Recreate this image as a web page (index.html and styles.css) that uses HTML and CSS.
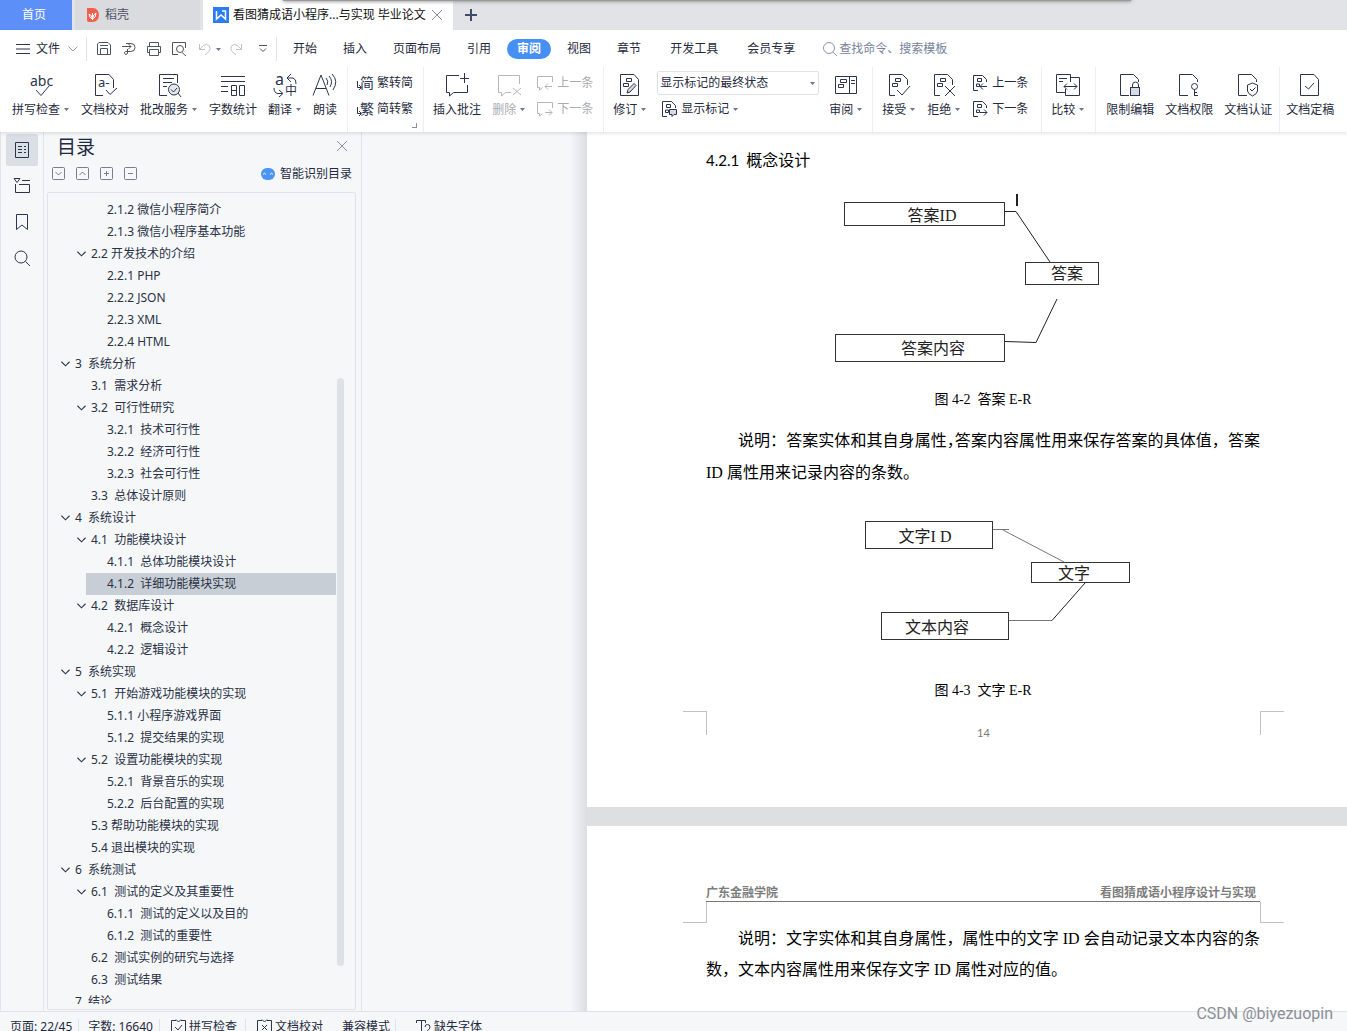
FILE: index.html
```html
<!DOCTYPE html>
<html lang="zh-CN">
<head>
<meta charset="utf-8">
<title>看图猜成语小程序设计与实现 毕业论文</title>
<link rel="stylesheet" href="styles.css">
</head>
<body>
<svg class="defs" aria-hidden="true">
  <symbol id="chev" viewBox="0 0 10 6"><path d="M.5 .5L5 5L9.5 .5"/></symbol>
  <symbol id="caret" viewBox="0 0 5 3"><path d="M0 0H5L2.5 3Z"/></symbol>
  <symbol id="docmark" viewBox="0 0 24 24"><path d="M8 22.500H2.500V1.500H15.500L20.500 6.500V12M8.500 5.500H13.500V8.500H8.500ZM5.500 10.500V13.500H10.500V10.500Z"/></symbol>
  <symbol id="docsmall" viewBox="0 0 16 16"><path d="M6 15.500H1.500V.5H10.500L14.500 4.500V7M5.500 3.500V6.500H9.500V3.500ZM4.500 9V11.500H7.500V9Z"/></symbol>
  <symbol id="blank" viewBox="0 0 24 24"><path d="M11 22.500H2.500V1.500H15.500L20.500 6.500V9"/></symbol>
</svg>
<div class="app">
  <header>
    <nav class="tabs" aria-label="标签">
      <div class="window-shade"></div>
      <button class="tab home">首页</button>
      <button class="tab docer"><svg width="16" height="16" viewBox="0 0 16 16"><path fill="#f2604d" stroke="none" d="M2 1H8A6 7 0 0 1 8 15H4Q2 15 2 13Z"/><path stroke="#fff" d="M7.500 13V6M7.500 12Q4 11 4 7Q7 8 7.500 12Q11 11 11 6Q8 7 7.500 12"/></svg>稻壳</button>
      <div class="tab current"><svg width="16" height="16" viewBox="0 0 16 16"><rect width="16" height="16" fill="#2b7cf0" stroke="none"/><path stroke="#fff" stroke-width="1.500" d="M3.500 4V12L8 8L12.500 12V4H9"/></svg><span>看图猜成语小程序...与实现 毕业论文</span><button class="close" aria-label="关闭标签"><svg width="10" height="10" viewBox="0 0 10 10"><path d="M0 0L10 10M10 0L0 10"/></svg></button></div>
      <button class="new" aria-label="新建"><svg width="12" height="12" viewBox="0 0 12 12"><path d="M6 0V12M0 6H12"/></svg></button>
    </nav>

    <div class="menu">
      <button class="file"><svg width="14" height="10" viewBox="0 0 14 10"><path d="M0 .5H14M0 5H14M0 9.500H14"/></svg>文件<svg class="pale" width="10" height="6"><use href="#chev"/></svg></button>
      <div class="quick">
        <button aria-label="保存"><svg width="16" height="16" viewBox="0 0 16 16"><path d="M1.500 13.500V3L3 1.500H12L14.500 4V13.500ZM4.500 13.500V7.500H11.500V13.500M4 4.500H12"/></svg></button>
        <button aria-label="输出为PDF"><svg width="16" height="16" viewBox="0 0 16 16"><path d="M5 2.500H10A4 4 0 0 1 10 10.500H6M1 5.500H10M7.500 3L10 5.500L7.500 8M6.500 8V12A1.500 1.500 0 1 1 4.500 10.500H7"/></svg></button>
        <button aria-label="打印"><svg width="16" height="16" viewBox="0 0 16 16"><path d="M3.500 5V1.500H12.500V5M3.500 11.500H1.500V5.500H14.500V11.500H12.500M3.500 8.500H12.500V14.500H3.500Z"/></svg></button>
        <button aria-label="打印预览"><svg width="16" height="16" viewBox="0 0 16 16"><path d="M7 13.500H1.500V1.500H14.500V7M11 11.500L15 15"/><circle cx="9" cy="8" r="3.500"/></svg></button>
        <button class="faint undo" aria-label="撤销"><svg width="14" height="14" viewBox="0 0 14 14"><path d="M1.500 2V7.500H7M1.500 7.500L5.500 3.500Q9 1 11.500 4Q13 7 11 9.500L7 13"/></svg></button>
        <button aria-label="撤销列表"><svg class="caret" width="5" height="3"><use href="#caret"/></svg></button>
        <button class="faint redo" aria-label="恢复"><svg width="14" height="14" viewBox="0 0 14 14"><path d="M12.500 2V7.500H7M12.500 7.500L8.500 3.500Q5 1 2.500 4Q1 7 3 9.500L7 13"/></svg></button>
        <button class="more" aria-label="更多"><svg width="8" height="8" viewBox="0 0 8 8"><path d="M0 .5H8M1 3.500L4 6.500L7 3.500"/></svg></button>
      </div>
      <nav class="menus" aria-label="功能区">
        <button>开始</button><button>插入</button><button>页面布局</button><button>引用</button><button class="on">审阅</button><button>视图</button><button>章节</button><button class="wide">开发工具</button><button class="wide">会员专享</button>
      </nav>
      <label class="search"><svg width="16" height="16" viewBox="0 0 16 16"><circle cx="7" cy="7" r="5.500"/><path d="M11 11L15 15"/></svg><input type="search" placeholder="查找命令、搜索模板" aria-label="查找命令"></label>
    </div>

    <div class="ribbon">
      <div class="group">
        <button class="tool"><svg viewBox="0 0 24 24"><text x="1" y="13" font-size="14">abc</text><path d="M7 17L12 22.500L20 13"/></svg><span>拼写检查<svg class="caret" width="5" height="3"><use href="#caret"/></svg></span></button>
        <button class="tool"><svg viewBox="0 0 24 24"><path d="M10 22.500H2.500V1.500H16L20.500 6.500V15M13 17L17 21.500L24 15"/><text x="5" y="14" font-size="13">a-</text></svg><span>文档校对</span></button>
        <button class="tool"><svg viewBox="0 0 24 24"><path d="M10 22.500H2.500V1.500H20.500V10M6 5.500H17M6 9.500H15M6 13.500H10M21 20L24 24"/><circle cx="17" cy="16.500" r="5.500" fill="#e5e7eb"/><path d="M14 16.500L16.500 19L20 15"/></svg><span>批改服务<svg class="caret" width="5" height="3"><use href="#caret"/></svg></span></button>
        <button class="tool"><svg viewBox="0 0 24 24"><path d="M0 3.500H24M0 8.500H24M0 13.500H7M0 18.500H7M10.500 12.500H15.500V22.500H10.500ZM18.500 12.500H23.500V22.500H18.500ZM10 17.500H15"/></svg><span>字数统计</span></button>
        <button class="tool"><svg viewBox="0 0 24 24"><text x="2" y="12" font-size="16">a</text><text x="12" y="22" font-size="12">中</text><path d="M18 1L14 5L18 9M14 5H20Q23.500 6 23 11M1 15Q1 20 5 20.500H9M6 17L10 20.500L6 24"/></svg><span>翻译<svg class="caret" width="5" height="3"><use href="#caret"/></svg></span></button>
        <button class="tool"><svg viewBox="0 0 24 24"><path d="M0 22.500L8 2L16 22.500M3 15.500H13M13 5Q16 8 14 12M16 3Q20.500 8 17 14M19 1Q26 8 20 17"/></svg><span>朗读</span></button>
      </div>
      <div class="group corner">
        <div class="pair">
          <button><svg viewBox="0 0 16 16"><text x="3" y="13" font-size="14">简</text><path d="M.5 6V12.500H4M2 10L4.500 12.500L2 15"/></svg>繁转简</button>
          <button><svg viewBox="0 0 16 16"><text x="3" y="13" font-size="14">繁</text><path d="M.5 6V12.500H4M2 10L4.500 12.500L2 15"/></svg>简转繁</button>
        </div>
      </div>
      <div class="group">
        <button class="tool"><svg viewBox="0 0 24 24"><path d="M14 2.500H1.500V19.500H4.500V23L8.500 19.500H22.500V12M19.500 0V10M15 5.500H24"/></svg><span>插入批注</span></button>
        <button class="tool" disabled><svg viewBox="0 0 24 24"><path d="M22.500 11V2.500H1.500V19.500H4.500V23L8.500 19.500H14M16 15L24 22M24 15L16 22"/></svg><span>删除<svg class="caret" width="5" height="3"><use href="#caret"/></svg></span></button>
        <div class="pair">
          <button disabled><svg viewBox="0 0 16 16"><path d="M15.500 7V1.500H.5V12.500H2.500V15L5.500 12.500M15 11.500H8M11 8.500L8 11.500L11 14.500"/></svg>上一条</button>
          <button disabled><svg viewBox="0 0 16 16"><path d="M15.500 7V1.500H.5V12.500H2.500V15L5.500 12.500M8 11.500H15M12 8.500L15 11.500L12 14.500"/></svg>下一条</button>
        </div>
      </div>
      <div class="group track">
        <button class="tool"><svg viewBox="0 0 24 24"><path d="M2.500 22.500V1.500H16L20.500 6.500V22.500ZM8.500 5.500V8.500H13.500V5.500ZM5.500 10.500V13.500H10.500V10.500Z"/><path fill="#d8dbe0" d="M9 20L10 16.500L16 10.500L18 12.500L12 19Z"/></svg><span>修订<svg class="caret" width="5" height="3"><use href="#caret"/></svg></span></button>
        <div class="pair">
          <span class="combo"><select aria-label="标记状态"><option>显示标记的最终状态</option></select><svg class="caret" width="5" height="3"><use href="#caret"/></svg></span>
          <button class="inset"><svg viewBox="0 0 16 16"><use href="#docsmall"/><path fill="#d8dbe0" d="M8.500 8.500H15.500V13.500H13L11 15.500V13.500H8.500Z"/></svg>显示标记<svg class="caret" width="5" height="3"><use href="#caret"/></svg></button>
        </div>
        <button class="tool"><svg viewBox="0 0 24 24"><path d="M1.500 3.500H22.500V20.500H1.500ZM15.500 3.500V20.500M6.500 6.500V9.500H12.500V6.500ZM4.500 11.500V14.500H9.500V11.500ZM17 7.500H21M17 10.500H21"/></svg><span>审阅<svg class="caret" width="5" height="3"><use href="#caret"/></svg></span></button>
      </div>
      <div class="group loose">
        <button class="tool"><svg viewBox="0 0 24 24"><use href="#docmark"/><path d="M10 17L15 22L23 13"/></svg><span>接受<svg class="caret" width="5" height="3"><use href="#caret"/></svg></span></button>
        <button class="tool"><svg viewBox="0 0 24 24"><use href="#docmark"/><path d="M13 13L23 23M23 13L13 23"/></svg><span>拒绝<svg class="caret" width="5" height="3"><use href="#caret"/></svg></span></button>
        <div class="pair">
          <button><svg viewBox="0 0 16 16"><use href="#docsmall"/><path d="M15 11.500H8M11 8.500L8 11.500L11 14.500"/></svg>上一条</button>
          <button><svg viewBox="0 0 16 16"><use href="#docsmall"/><path d="M8 11.500H15M12 8.500L15 11.500L12 14.500"/></svg>下一条</button>
        </div>
      </div>
      <div class="group">
        <button class="tool"><svg viewBox="0 0 24 24"><path d="M14.500 9V1.500H.5V19.500H9M14.500 4.500H23.500V22.500H9.500V16M3 5.500H11M3 8.500H7M8 13.500H21M11 10.500L8 13.500L11 16.500M18 10.500L21 13.500L18 16.500"/></svg><span>比较<svg class="caret" width="5" height="3"><use href="#caret"/></svg></span></button>
      </div>
      <div class="group tight">
        <button class="tool"><svg viewBox="0 0 24 24"><use href="#blank"/><path d="M14.500 15V12A3 3 0 0 1 20.500 12V15"/><rect x="12.500" y="14.500" width="9" height="8" fill="#d8dbe0"/></svg><span>限制编辑</span></button>
        <button class="tool"><svg viewBox="0 0 24 24"><use href="#blank"/><circle cx="17.500" cy="13.500" r="3"/><path d="M17.500 16.500V23M17.500 19.500H20M17.500 22.500H21"/></svg><span>文档权限</span></button>
        <button class="tool"><svg viewBox="0 0 24 24"><use href="#blank"/><path d="M11.500 12L16.500 10L21.500 12V18Q21 21 16.500 23Q12 21 11.500 18ZM14 16L16 18L19.500 14.500"/></svg><span>文档认证</span></button>
      </div>
      <div class="group last">
        <button class="tool"><svg viewBox="0 0 24 24"><path d="M2.500 22.500V1.500H16L20.500 6.500V22.500ZM7 13L10.500 16L16 10"/></svg><span>文档定稿</span></button>
      </div>
    </div>
  </header>

  <div class="main">
    <nav class="rail" aria-label="侧栏">
      <button class="on" aria-label="目录"><svg width="16" height="16" viewBox="0 0 16 16"><path d="M1.500 .5H14.500V15.500H1.500ZM4 4.500H8M10 4.500H12M4 7.500H8M10 7.500H12M4 10.500H8M10 10.500H12"/></svg></button>
      <button aria-label="章节"><svg width="16" height="16" viewBox="0 0 16 16"><path d="M0 .5H6L3 4.500ZM8 2.500H16M1.500 6V14.500H15.500V6.500H5"/></svg></button>
      <button aria-label="书签"><svg width="16" height="16" viewBox="0 0 16 16"><path d="M2.500 .5H13.500V15.500L8 11L2.500 15.500Z"/></svg></button>
      <button aria-label="查找"><svg width="16" height="16" viewBox="0 0 16 16"><circle cx="7" cy="7" r="6"/><path d="M11.500 11.500L16 16"/></svg></button>
    </nav>

    <aside class="panel">
      <div class="title"><h2>目录</h2><button aria-label="关闭"><svg width="10" height="10" viewBox="0 0 10 10"><path d="M0 0L10 10M10 0L0 10"/></svg></button></div>
      <div class="bar">
        <button aria-label="展开"><svg width="13" height="13" viewBox="0 0 13 13"><rect x=".5" y=".5" width="12" height="12" rx="1"/><path d="M3.500 5L6.500 8L9.500 5"/></svg></button>
        <button aria-label="折叠"><svg width="13" height="13" viewBox="0 0 13 13"><rect x=".5" y=".5" width="12" height="12" rx="1"/><path d="M3.500 8L6.500 5L9.500 8"/></svg></button>
        <button aria-label="增加"><svg width="13" height="13" viewBox="0 0 13 13"><rect x=".5" y=".5" width="12" height="12" rx="1"/><path d="M4 6.500H9M6.500 4V9"/></svg></button>
        <button aria-label="减少"><svg width="13" height="13" viewBox="0 0 13 13"><rect x=".5" y=".5" width="12" height="12" rx="1"/><path d="M4 6.500H9"/></svg></button>
        <button class="smart"><svg width="14" height="12" viewBox="0 0 14 12"><rect width="14" height="12" rx="6" fill="#4a94f5" stroke="none"/><path stroke="#fff" d="M2 6.500Q3.500 4 5 6.500M9 6.500Q10.500 4 12 6.500"/></svg>智能识别目录</button>
      </div>
      <div class="outline">
        <ul>
          <li class="l3"><a href="#">2.1.2 微信小程序简介</a></li>
          <li class="l3"><a href="#">2.1.3 微信小程序基本功能</a></li>
          <li class="l2"><svg><use href="#chev"/></svg><a href="#">2.2 开发技术的介绍</a></li>
          <li class="l3"><a href="#">2.2.1 PHP</a></li>
          <li class="l3"><a href="#">2.2.2 JSON</a></li>
          <li class="l3"><a href="#">2.2.3 XML</a></li>
          <li class="l3"><a href="#">2.2.4 HTML</a></li>
          <li class="l1"><svg><use href="#chev"/></svg><a href="#">3  系统分析</a></li>
          <li class="l2"><a href="#">3.1  需求分析</a></li>
          <li class="l2"><svg><use href="#chev"/></svg><a href="#">3.2  可行性研究</a></li>
          <li class="l3"><a href="#">3.2.1  技术可行性</a></li>
          <li class="l3"><a href="#">3.2.2  经济可行性</a></li>
          <li class="l3"><a href="#">3.2.3  社会可行性</a></li>
          <li class="l2"><a href="#">3.3  总体设计原则</a></li>
          <li class="l1"><svg><use href="#chev"/></svg><a href="#">4  系统设计</a></li>
          <li class="l2"><svg><use href="#chev"/></svg><a href="#">4.1  功能模块设计</a></li>
          <li class="l3"><a href="#">4.1.1  总体功能模块设计</a></li>
          <li class="l3 on"><a href="#" aria-current="true">4.1.2  详细功能模块实现</a></li>
          <li class="l2"><svg><use href="#chev"/></svg><a href="#">4.2  数据库设计</a></li>
          <li class="l3"><a href="#">4.2.1  概念设计</a></li>
          <li class="l3"><a href="#">4.2.2  逻辑设计</a></li>
          <li class="l1"><svg><use href="#chev"/></svg><a href="#">5  系统实现</a></li>
          <li class="l2"><svg><use href="#chev"/></svg><a href="#">5.1  开始游戏功能模块的实现</a></li>
          <li class="l3"><a href="#">5.1.1 小程序游戏界面</a></li>
          <li class="l3"><a href="#">5.1.2  提交结果的实现</a></li>
          <li class="l2"><svg><use href="#chev"/></svg><a href="#">5.2  设置功能模块的实现</a></li>
          <li class="l3"><a href="#">5.2.1  背景音乐的实现</a></li>
          <li class="l3"><a href="#">5.2.2  后台配置的实现</a></li>
          <li class="l2"><a href="#">5.3 帮助功能模块的实现</a></li>
          <li class="l2"><a href="#">5.4 退出模块的实现</a></li>
          <li class="l1"><svg><use href="#chev"/></svg><a href="#">6  系统测试</a></li>
          <li class="l2"><svg><use href="#chev"/></svg><a href="#">6.1  测试的定义及其重要性</a></li>
          <li class="l3"><a href="#">6.1.1  测试的定义以及目的</a></li>
          <li class="l3"><a href="#">6.1.2  测试的重要性</a></li>
          <li class="l2"><a href="#">6.2  测试实例的研究与选择</a></li>
          <li class="l2"><a href="#">6.3  测试结果</a></li>
          <li class="l1"><a href="#">7  结论</a></li>
        </ul>
        <div class="thumb"></div>
      </div>
    </aside>

    <main class="canvas">
      <div class="sheets">
        <article class="sheet first">
          <h3><span>4.2.1</span>  概念设计</h3>
          <svg class="figure" width="554" height="207" viewBox="706 177 554 207" role="img" aria-label="答案 E-R">
            <g class="box"><rect x="844.500" y="202.500" width="160" height="23"/><rect x="1025.500" y="262.500" width="73" height="22"/><rect x="835.500" y="334.500" width="169" height="27"/></g>
            <path d="M1005 211.500H1016L1050 262M1005 341.500L1036 342.500L1057 299"/>
            <path stroke-width="2" d="M1017 194V206"/>
            <text x="932" y="221">答案ID</text><text x="1067" y="279">答案</text><text x="933" y="354">答案内容</text>
          </svg>
          <p class="caption">图 4-2  答案 E-R</p>
          <p class="body"><span class="line full indent">说明：答案实体和其自身属性<span class="half">，</span>答案内容属性用来保存答案的具体值，答案</span><span class="line">ID 属性用来记录内容的条数。</span></p>
          <svg class="figure" width="554" height="186" viewBox="706 489 554 186" role="img" aria-label="文字 E-R">
            <g class="box"><rect x="865.500" y="521.500" width="127" height="27"/><rect x="1031.500" y="562.500" width="98" height="20"/><rect x="881.500" y="612.500" width="127" height="27"/></g>
            <path class="soft" d="M993 529.500H1009M1003 530L1064 562M1009 620.500H1052"/><path d="M1052 620.500L1085 583"/>
            <text x="925" y="542">文字I D</text><text x="1074" y="579">文字</text><text x="937" y="633">文本内容</text>
          </svg>
          <p class="caption">图 4-3  文字 E-R</p>
          <footer><i class="mark left"></i><span>14</span><i class="mark right"></i></footer>
        </article>
        <article class="sheet second">
          <div class="running"><span>广东金融学院</span><span>看图猜成语小程序设计与实现</span></div>
          <div class="marks"><i class="mark left low"></i><i class="mark right low"></i></div>
          <p class="body"><span class="line full indent">说明：文字实体和其自身属性，属性中的文字 ID 会自动记录文本内容的条</span><span class="line">数，文本内容属性用来保存文字 ID 属性对应的值。</span></p>
        </article>
      </div>
    </main>
  </div>

  <footer class="status">
    <span class="ruled">页面: 22/45</span><span class="ruled">字数: 16640</span>
    <button class="ruled"><svg width="15" height="16" viewBox="0 0 15 16"><path d="M5 1.500H.5V15.500H14.500V1.500H10M5 .5L7.500 3L10 .5M4 8L7 11L11 6"/></svg>拼写检查</button>
    <button><svg width="15" height="16" viewBox="0 0 15 16"><path d="M5 1.500H.5V15.500H14.500V1.500H10M5 .5L7.500 3L10 .5M5 6L10 11M10 6L5 11"/></svg>文档校对</button>
    <span class="mode ruled">兼容模式</span>
    <button><svg width="15" height="16" viewBox="0 0 15 16"><path d="M.5 4V1.500H9.500V4M5.500 1.500V14M4 14.500H7M9 8Q9 5.500 11.500 5.500Q14 5.500 14 8Q14 10 11.500 11.500V14"/></svg>缺失字体</button>
  </footer>
  <div class="watermark">CSDN @biyezuopin</div>
</div>
</body>
</html>
```
FILE: styles.css
```css
* { box-sizing: border-box; }
body, h2, h3, p, ul { margin: 0; padding: 0; }
body {
  font: 12px/16px "Noto Sans", "Noto Sans CJK SC", sans-serif;
  color: #1f2a40;
  overflow: hidden;
}
button, input, select {
  font: inherit;
  color: inherit;
  border: 0;
  background: none;
  padding: 0;
  margin: 0;
  white-space: nowrap;
}
svg { fill: none; stroke: #2b3550; flex: none; overflow: visible; }
svg text { fill: #2b3550; stroke: none; }
.defs { position: absolute; width: 0; height: 0; }
svg.caret { fill: #6b7590; stroke: none; }
.app { display: flex; flex-direction: column; height: 100vh; position: relative; }
header { position: relative; z-index: 1; background: #fff; flex: none; box-shadow: 0 1px 4px rgba(40, 50, 70, .16); }

/* window tabs */
.tabs { display: flex; height: 30px; background: #e2e3e7; position: relative; overflow: hidden; gap: 3px; }
.window-shade {
  position: absolute;
  top: -4px;
  left: 21%;
  right: 16%;
  height: 5px;
  background: #999;
  box-shadow: 0 0 4px #777;
}
.tab { display: flex; align-items: center; flex: none; }
.home { width: 72px; justify-content: center; padding-right: 4px; background: #5d8ff9; color: #fff; }
.docer { width: 125px; gap: 4px; padding-left: 10px; background: #dadbde; color: #4a5163; }
.current { width: 250px; gap: 4px; padding-left: 10px; background: #fff; color: #111; white-space: nowrap; }
.tab .close { display: flex; margin-left: auto; margin-right: 11px; }
.close svg, .title svg { stroke: #8791a8; }
.new { display: flex; align-items: center; margin-left: 9px; }
.new svg { stroke: #3f4b68; stroke-width: 2; }

/* menu row */
.menu { display: flex; align-items: center; height: 37px; padding-top: 1px; }
.menu button { display: flex; align-items: center; flex: none; }
.file { gap: 6px; padding: 0 8px 0 16px; }
.file .pale { stroke: #9aa1b0; margin-left: 2px; }
.quick { display: flex; align-items: center; gap: 9px; height: 24px; padding: 0 9px 0 9px; border: 1px solid #e0e2e7; border-width: 0 1px; }
.quick svg:not(.caret) { stroke: #50545e; }
.quick .undo { margin-left: 2px; }
.quick .undo + button { margin: 0 -1px 0 -5px; }
.quick .more { margin: 0 0 0 7px; }
.quick .faint svg { stroke: #c0c3ca; }
.menus { display: flex; padding-left: 3px; }
.menus button { padding: 2px 13px; }
.menus .wide { margin-left: 3px; }
.menus .on { padding: 2px 10px; margin: 0 3px; border-radius: 10px; background: #458ff5; color: #fff; font-weight: bold; }
.search { display: flex; align-items: center; flex: 1; gap: 1px; margin-left: 14px; color: #76829c; }
.search svg { stroke: #8a96ae; }
.search input { flex: 1; min-width: 0; outline: none; }
.search input::placeholder { color: #76829c; opacity: 1; }

/* ribbon */
.ribbon { display: flex; height: 65px; padding-left: 3px; overflow: hidden; }
.group { display: flex; flex: none; gap: 11px; padding: 6px 10px 0 9px; border-right: 1px solid #eceef1; }
.group.track { gap: 10px; padding-right: 9px; }
.group.loose { padding-right: 13px; }
.group.tight { padding-left: 10px; padding-right: 7px; }
.group.last { padding-left: 6px; border: 0; }
.corner { position: relative; }
.corner::after {
  content: "";
  position: absolute;
  right: 6px;
  bottom: 4px;
  width: 4px;
  height: 4px;
  border: 1px solid #8791a8;
  border-width: 0 1px 1px 0;
}
.tool { display: flex; flex-direction: column; align-items: center; gap: 4px; height: 48px; }
.tool > svg { width: 24px; height: 24px; }
.tool span { display: flex; align-items: center; gap: 4px; line-height: 17px; }
.tool span .caret { margin-right: 1px; }
.pair { display: flex; flex-direction: column; gap: 2px; margin-top: -2px; }
.pair button { display: flex; align-items: center; gap: 4px; height: 24px; }
.pair button > svg:first-child { width: 16px; height: 16px; }
.pair .inset { padding-left: 4px; }
.combo { position: relative; display: flex; align-items: center; width: 162px; height: 24px; }
.combo select { appearance: none; width: 100%; height: 24px; padding: 0 2px; border: 1px solid #dfe2e7; border-radius: 2px; }
.combo .caret { position: absolute; right: 4px; }
button:disabled { color: #a9acb3; }
button:disabled svg:not(.caret) { stroke: #b3b6bd; }

/* work area */
.main { display: flex; flex: 1; min-height: 0; background: #f5f7f9; }
.rail { display: flex; flex-direction: column; align-items: center; gap: 4px; width: 44px; flex: none; padding-top: 2px; border: 1px solid #e1e4e9; border-width: 0 1px; }
.rail button { display: flex; align-items: center; justify-content: center; width: 32px; height: 32px; border-radius: 2px; }
.rail .on { background: #dadfe6; }
.panel { display: flex; flex-direction: column; width: 318px; flex: none; padding: 0 5px 0 3px; border-right: 1px solid #e1e4e9; }
.title { display: flex; justify-content: space-between; align-items: center; height: 30px; padding: 0 9px 0 10px; }
.title h2 { font-size: 19px; line-height: 28px; font-weight: normal; }
.bar { display: flex; align-items: center; gap: 11px; height: 23px; padding: 0 4px 0 5px; }
.bar button { display: flex; align-items: center; gap: 5px; }
.bar svg { stroke: #777e8d; }
.bar .smart { margin-left: auto; }
.outline { position: relative; flex: 1; min-height: 0; margin-top: 7px; padding: 6px 0 5px; border: 1px solid #e0e3e8; border-radius: 2px; margin-bottom: 1px; }
.outline ul { list-style: none; height: 100%; overflow: hidden; padding-right: 19px; }
.outline li { display: flex; align-items: center; height: 22px; margin-left: 38px; white-space: pre; }
.outline li svg { width: 9px; height: 6px; margin: 0 5px 0 -14px; stroke-width: 1.2; }
.outline a { color: #2a3245; text-decoration: none; }
.outline .l1 { margin-left: 27px; }
.outline .l2 { margin-left: 43px; }
.outline .l3 { padding-left: 21px; }
.outline .on { background: #c8ced6; }
.thumb { position: absolute; right: 11px; bottom: 43px; height: 72%; width: 7px; border-radius: 4px; background: #dee1e5; }

/* document */
.canvas { flex: 1; min-width: 0; overflow: hidden; padding-left: 225px; background: linear-gradient(to right, #f5f7f9 208px, #dcdee1 225px); }
.sheets { width: 793px; background: #dedfe1; display: flex; flex-direction: column; gap: 19px; min-height: 100%; }
.sheet { background: #fff; padding: 0 120px 0 119px; color: #000; }
.first { padding-top: 11px; padding-bottom: 66px; }
.second { padding-top: 59px; flex: 1; }
.sheet h3 { font: 16px/32px "Noto Sans CJK SC", sans-serif; white-space: pre; margin-bottom: 1px; }
.sheet h3 span { font: 15px/32px Lato, sans-serif; }
.figure { display: block; stroke: #222; }
.figure .box { stroke: #333; }
.figure .soft { stroke: #777; }
.figure text { font: 16px "Liberation Serif", "Noto Sans CJK SC", serif; text-anchor: middle; fill: #222; }
.caption { font: 14px/32px "Liberation Serif", "Noto Sans CJK SC", serif; text-align: center; white-space: pre; }
.body { font: 16px/32px "Liberation Serif", "Noto Sans CJK SC", serif; }
.first .body { padding-top: 9px; }
.second .body { line-height: 31px; }
.line { display: block; white-space: nowrap; }
.full { text-align-last: justify; }
.indent { padding-left: 32px; }
.half { font-feature-settings: "halt"; }
.sheet footer, .marks { display: flex; justify-content: space-between; align-items: flex-start; margin: 0 -24px 0 -23px; }
.sheet footer { height: 30px; margin-top: 4px; }
.sheet footer span { align-self: flex-end; font: 11px/16px Lato, sans-serif; color: #777; }
.mark { width: 24px; height: 24px; border: 0 solid #c2c2c2; border-top-width: 1px; }
.mark.left { border-right-width: 1px; }
.mark.right { border-left-width: 1px; }
.mark.low { height: 21px; border-top-width: 0; border-bottom-width: 1px; }
.running { display: flex; justify-content: space-between; padding-right: 4px; border-bottom: 1px solid #777; font: bold 12px/16px "Liberation Serif", "Noto Sans CJK SC", serif; color: #7d7d7d; }

/* status bar */
.status { display: flex; align-items: flex-start; height: 20px; flex: none; overflow: hidden; padding: 7px 0 0 4px; background: #f5f7f9; border-top: 1px solid #dfe2e7; white-space: nowrap; }
.status > * { display: flex; align-items: center; gap: 3px; height: 16px; flex: none; padding: 0 6px; margin-right: 3px; }
.status > .ruled { border-right: 1px solid #dfe2e7; }
.status > button { padding: 0 8px; }
.status > .mode { padding: 0 5px 0 8px; margin-right: 12px; }
.watermark { position: absolute; right: 14px; bottom: 7px; z-index: 1; font: 16px/20px Roboto, sans-serif; color: #8c9096; }
```
